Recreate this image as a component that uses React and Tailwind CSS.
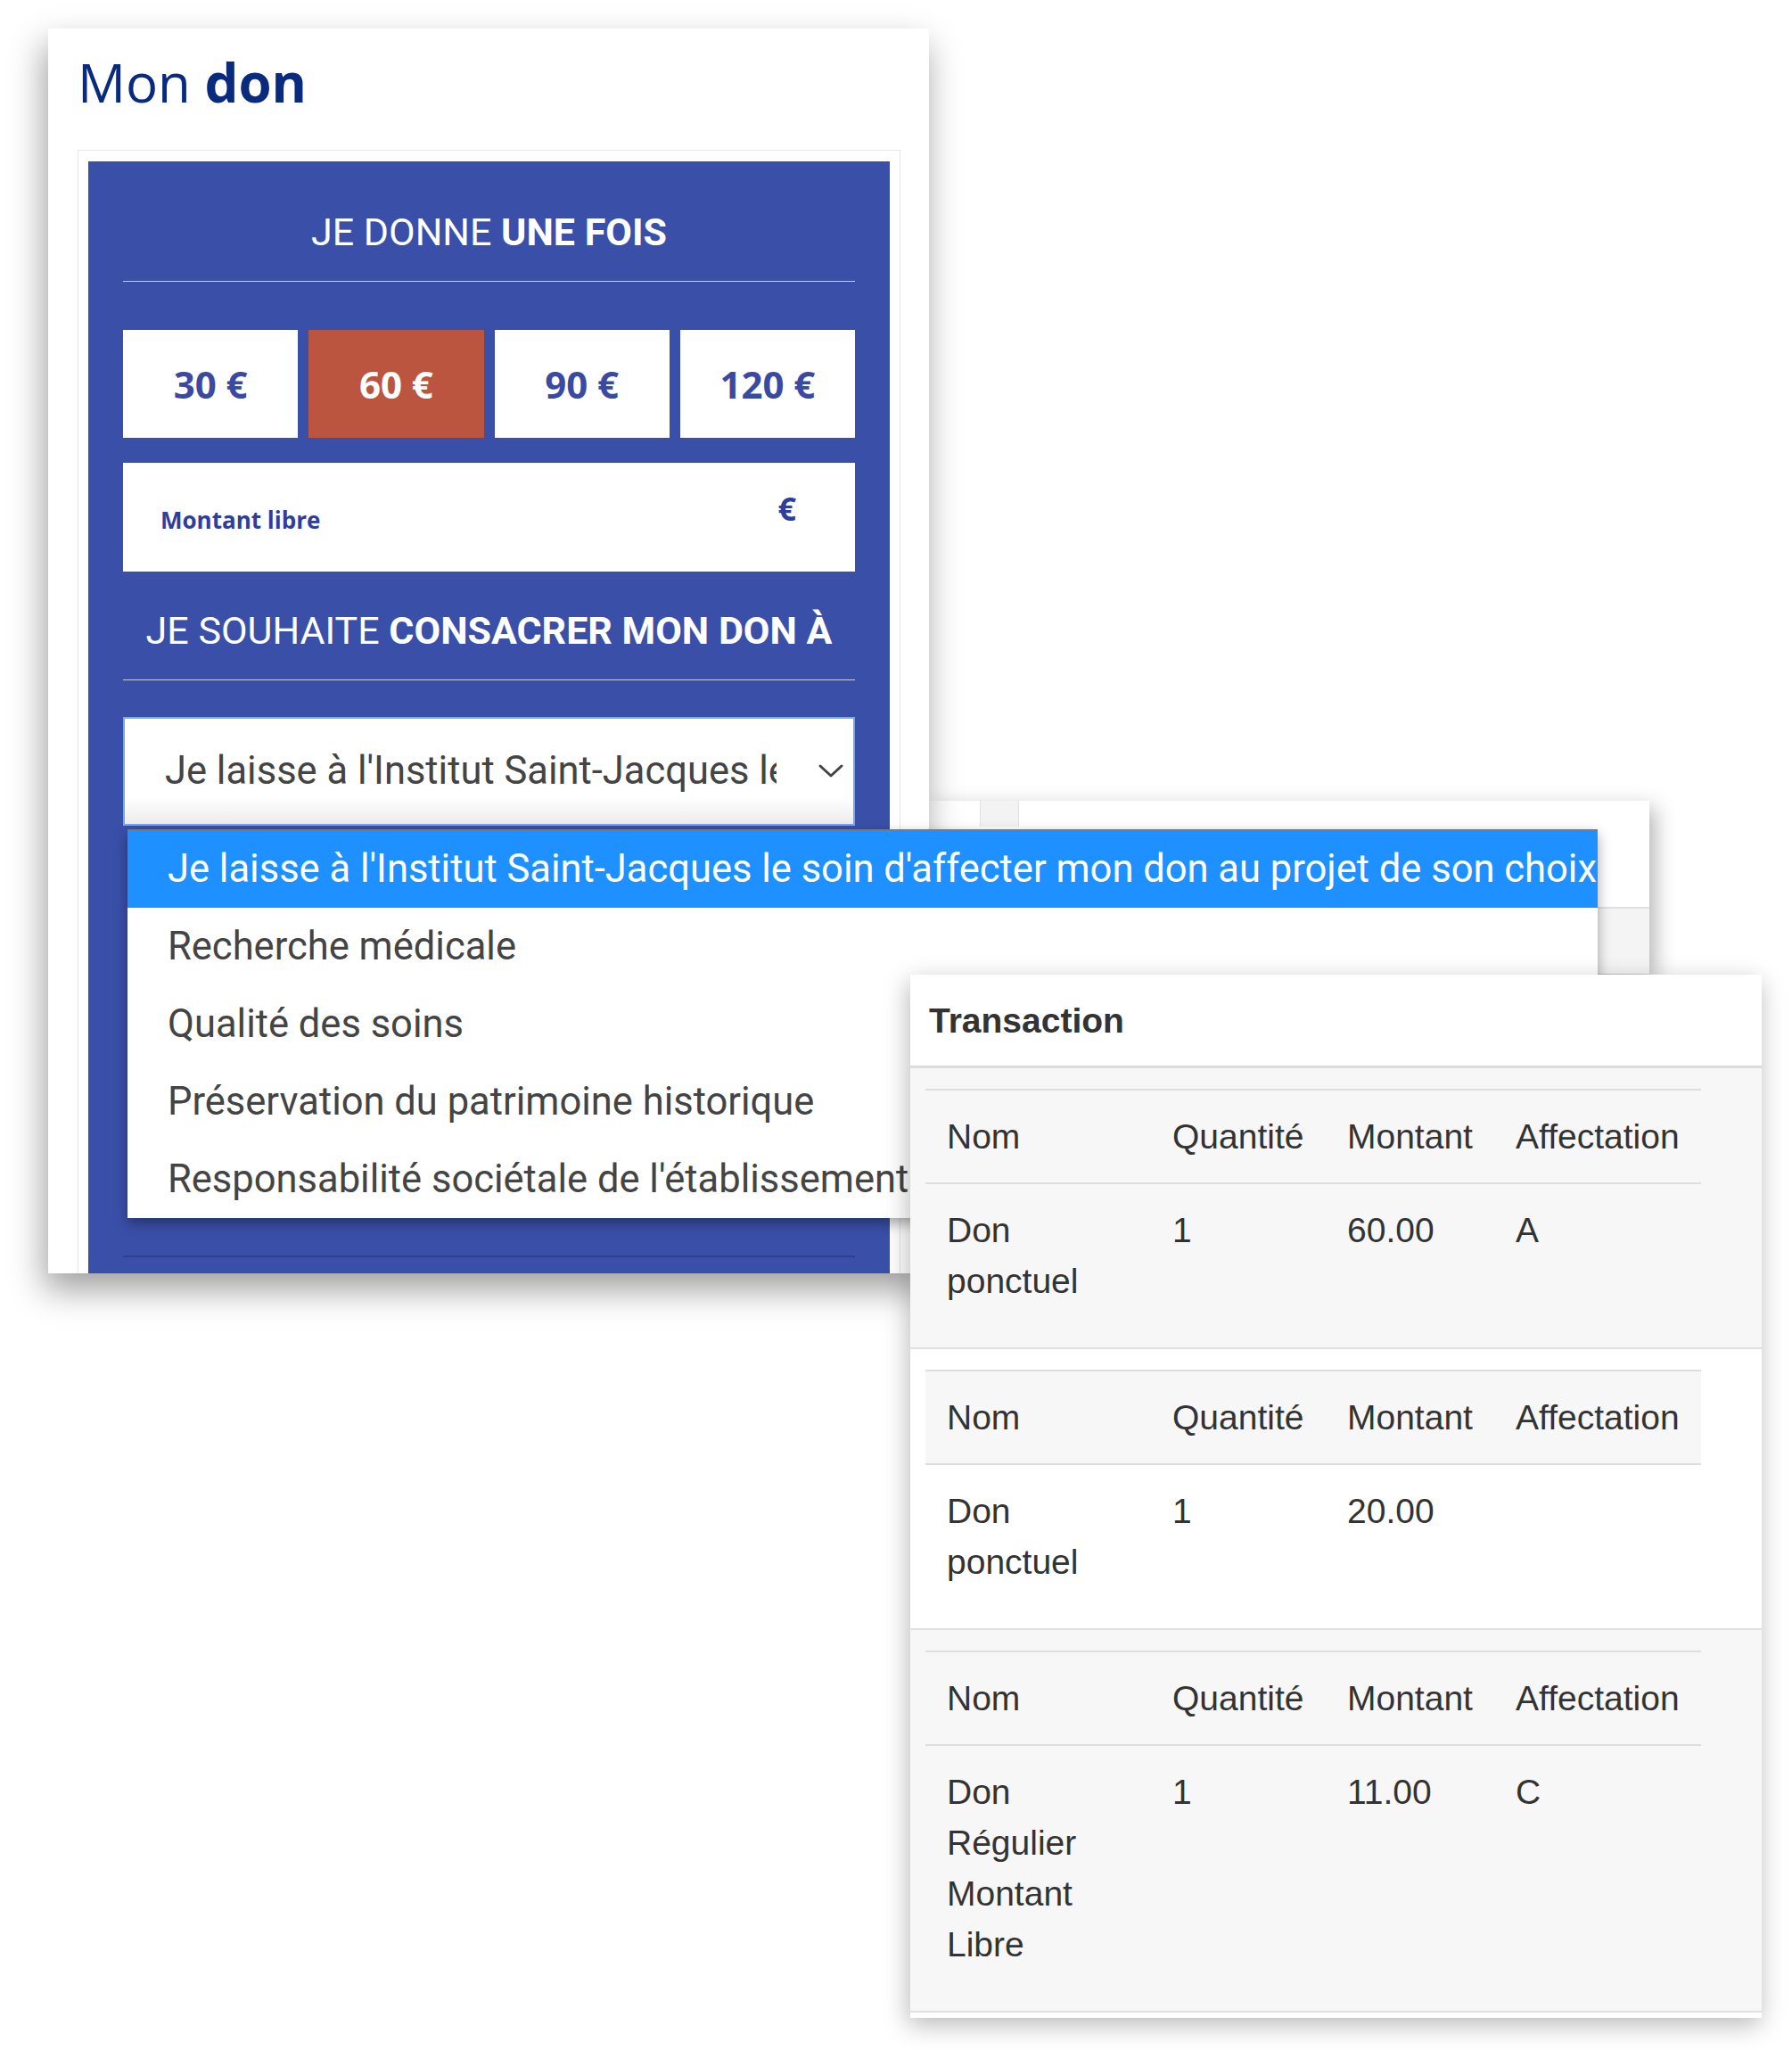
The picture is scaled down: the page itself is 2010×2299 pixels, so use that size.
const amounts = ["30 €", "60 €", "90 €", "120 €"];

const options = [
  "Je laisse à l'Institut Saint-Jacques le soin d'affecter mon don au projet de son choix",
  "Recherche médicale",
  "Qualité des soins",
  "Préservation du patrimoine historique",
  "Responsabilité sociétale de l'établissement",
];

const transactions = [
  { nom: "Don ponctuel", qte: "1", montant: "60.00", affectation: "A", striped: true },
  { nom: "Don ponctuel", qte: "1", montant: "20.00", affectation: "", striped: false },
  { nom: "Don Régulier Montant Libre", qte: "1", montant: "11.00", affectation: "C", striped: true },
];

const roboto = "font-['Roboto',sans-serif]";
const openSans = "font-['Open_Sans',sans-serif]";

function Chevron() {
  return (
    <svg width="30" height="18" viewBox="0 0 30 18" fill="none">
      <polyline points="3,3 15,14 27,3" stroke="#444" strokeWidth="3" strokeLinecap="round" strokeLinejoin="round" />
    </svg>
  );
}

function DonCard() {
  return (
    <div className="absolute left-[54px] top-[32px] h-[1396px] w-[988px] overflow-hidden bg-white shadow-[-4px_18px_36px_rgba(0,0,0,0.38)]">
      <h1 className={`${openSans} pl-[33px] pt-[22px] text-[60px] leading-[77px] text-[#0a2a7d]`}>
        Mon <span className="font-bold">don</span>
      </h1>

      <div className="ml-[33px] mt-[37px] h-[1300px] w-[923px] border border-[#e6e6e6] px-[11px] pt-[12px]">
        <div className={`${roboto} h-full bg-[#3a4fa8] px-[39px] pt-[54px]`}>
          <p className="text-center text-[43px] leading-[50px] text-white">
            JE DONNE <span className="font-bold">UNE FOIS</span>
          </p>
          <div className="mt-[30px] h-px bg-[#c9cfea]" />

          <div className="mt-[54px] grid h-[121px] grid-cols-4 gap-[12px]">
            {amounts.map((a) => (
              <div
                key={a}
                className={`${openSans} flex items-center justify-center text-[42px] font-bold ${
                  a === "60 €" ? "bg-[#bc5540] text-white" : "bg-white text-[#3a4aa3]"
                }`}
              >
                {a}
              </div>
            ))}
          </div>

          <div className={`${openSans} mt-[28px] flex h-[122px] items-start bg-white pl-[42px] pr-[66px]`}>
            <span className="mt-[45px] flex-1 text-[26px] font-bold text-[#2d3e9e]">Montant libre</span>
            <span className="mt-[25px] text-[36px] font-bold text-[#2d3e9e]">€</span>
          </div>

          <p className="mt-[41px] text-center text-[43px] leading-[50px] text-white">
            JE SOUHAITE <span className="font-bold">CONSACRER MON DON À</span>
          </p>
          <div className="mt-[30px] h-px bg-[#c9cfea]" />

          <div className="mt-[41px] flex h-[122px] items-center border-2 border-[#79a6ec] bg-gradient-to-b from-white from-75% to-[#ececec] pl-[45px] pr-[10px]">
            <span className="block w-[686px] overflow-hidden whitespace-nowrap text-[43.5px] text-[#444]">
              {options[0]}
            </span>
            <span className="ml-auto flex">
              <Chevron />
            </span>
          </div>

          <div className="mt-[482px] h-[2px] bg-[#2e3f8f]" />
        </div>
      </div>
    </div>
  );
}

function BehindPanel() {
  return (
    <div className="absolute left-[1040px] top-[898px] flex h-[194px] w-[810px] flex-col bg-white shadow-[6px_8px_22px_rgba(0,0,0,0.3)]">
      <div className="flex h-[29px]">
        <div className="ml-[49px] w-[11px] border-r border-[#e2e2e2]" />
        <div className="w-[43px] border-r border-[#e2e2e2] bg-[#f3f3f3]" />
      </div>
      <div className="mt-[90px] flex-1 border-t-2 border-[#e0e0e0] bg-[#f4f4f4]" />
    </div>
  );
}

function Dropdown() {
  return (
    <div className={`${roboto} absolute left-[143px] top-[930px] w-[1649px] border-t border-[#777] bg-white shadow-[0_6px_14px_rgba(0,0,0,0.35)]`}>
      {options.map((o, i) => (
        <div
          key={o}
          className={`flex h-[87px] items-center whitespace-nowrap pl-[45px] text-[43.5px] ${
            i === 0 ? "bg-[#1e90ff] text-white" : "text-[#444]"
          }`}
        >
          {o}
        </div>
      ))}
    </div>
  );
}

function TxTable({ row, striped }) {
  const cols = "grid grid-cols-[253px_196px_189px_232px]";
  const cell = "px-[24px] py-[23px]";
  return (
    <div className="w-[870px] border-t-2 border-[#dedede]">
      <div className={`${cols} border-b-2 border-[#dedede] ${striped ? "" : "bg-[#f7f7f7]"}`}>
        {["Nom", "Quantité", "Montant", "Affectation"].map((h) => (
          <div key={h} className={cell}>
            {h}
          </div>
        ))}
      </div>
      <div className={cols}>
        <div className={cell}>{row.nom}</div>
        <div className={cell}>{row.qte}</div>
        <div className={cell}>{row.montant}</div>
        <div className={cell}>{row.affectation}</div>
      </div>
    </div>
  );
}

function TransactionPanel() {
  return (
    <div className="absolute left-[1021px] top-[1093px] h-[1170px] w-[955px] bg-white font-['Liberation_Sans',Arial,sans-serif] text-[39px] leading-[57px] text-[#333] shadow-[-2px_8px_26px_rgba(0,0,0,0.28)]">
      <div className="flex h-[105px] items-center border-b-[3px] border-[#dcdcdc] px-[21px]">
        <h2 className="font-bold">Transaction</h2>
      </div>
      {transactions.map((t, i) => (
        <div
          key={i}
          className={`border-b-2 border-[#e0e0e0] px-[17px] py-[23px] ${t.striped ? "bg-[#f7f7f7]" : "bg-white"}`}
        >
          <TxTable row={t} striped={t.striped} />
        </div>
      ))}
    </div>
  );
}

export default function App() {
  return (
    <div className="relative h-[2299px] w-[2010px] overflow-hidden bg-white">
      <BehindPanel />
      <DonCard />
      <Dropdown />
      <TransactionPanel />
    </div>
  );
}
